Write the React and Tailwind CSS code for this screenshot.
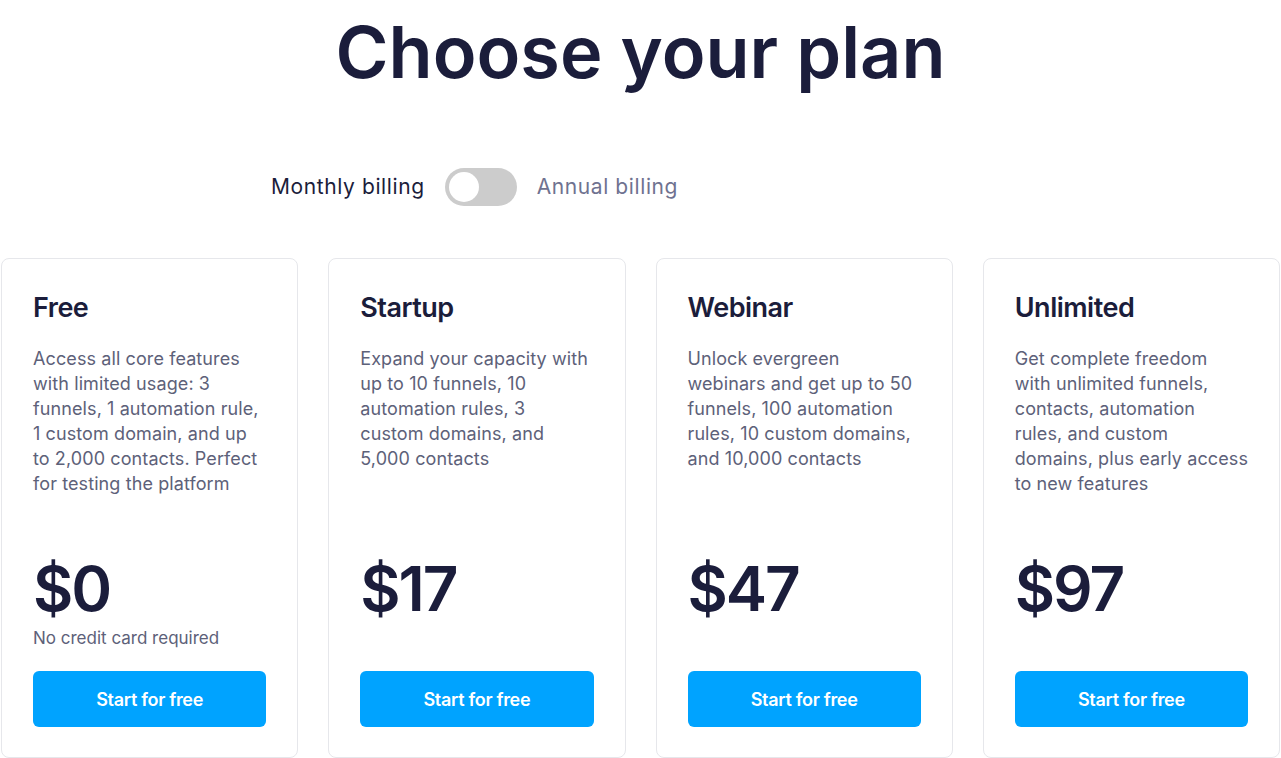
const PLANS = [
  {
    name: 'Free',
    blurb: [
      'Access all core features',
      'with limited usage: 3',
      'funnels, 1 automation rule,',
      '1 custom domain, and up',
      'to 2,000 contacts. Perfect',
      'for testing the platform',
    ],
    price: '$0',
    note: 'No credit card required',
  },
  {
    name: 'Startup',
    blurb: ['Expand your capacity with', 'up to 10 funnels, 10', 'automation rules, 3', 'custom domains, and', '5,000 contacts'],
    price: '$17',
  },
  {
    name: 'Webinar',
    blurb: [
      'Unlock evergreen',
      'webinars and get up to 50',
      'funnels, 100 automation',
      'rules, 10 custom domains,',
      'and 10,000 contacts',
    ],
    price: '$47',
  },
  {
    name: 'Unlimited',
    blurb: [
      'Get complete freedom',
      'with unlimited funnels,',
      'contacts, automation',
      'rules, and custom',
      'domains, plus early access',
      'to new features',
    ],
    price: '$97',
  },
]

const PlanCard = ({ plan }) => (
  <div className="flex flex-col rounded-lg border border-[#e6e7eb] bg-white px-[31px] pt-[31px] pb-[30px]">
    <h3 className="text-[27px] font-semibold leading-[36px] tracking-[-0.5px] text-[#1b1d3b]">{plan.name}</h3>
    <p className="mt-[20px] min-h-[150px] text-[18px] leading-[25px] tracking-[0.1px] text-[#5d6179]">
      {plan.blurb.map((line, i) => (
        <span key={i} className="block">
          {line}
        </span>
      ))}
    </p>
    <div className="mt-[55px]">
      <p className="text-[62px] font-semibold leading-[76px] tracking-[-2px] text-[#1b1d3b]">{plan.price}</p>
      <p className="h-[24px] text-[17px] leading-[22px] text-[#5d6179]">{plan.note}</p>
    </div>
    <button
      type="button"
      className="mt-[20px] h-[56px] w-full rounded-md bg-[#00a3ff] text-[18px] font-semibold tracking-[-0.3px] text-white"
    >
      Start for free
    </button>
  </div>
)

export default function App() {
  return (
    <div className="min-h-screen bg-white font-['Inter',sans-serif]">
      <h1 className="pt-[2px] text-center text-[72px] font-semibold leading-[100px] tracking-[0px] text-[#1b1d3b]">
        Choose your plan
      </h1>
      <div className="mt-[66px] ml-[271px] flex items-center gap-[20px]">
        <span className="text-[21px] tracking-[0.6px] text-[#1b1d3b]">Monthly billing</span>
        <button
          type="button"
          className="flex h-[38px] w-[72px] items-center rounded-full bg-[#cccccc] px-[4px]"
        >
          <span className="h-[30px] w-[30px] rounded-full bg-white" />
        </button>
        <span className="text-[21px] tracking-[0.6px] text-[#6f7290]">Annual billing</span>
      </div>
      <div className="mt-[52px] grid grid-cols-4 gap-[30px] px-px">
        {PLANS.map((plan) => (
          <PlanCard key={plan.name} plan={plan} />
        ))}
      </div>
    </div>
  )
}
